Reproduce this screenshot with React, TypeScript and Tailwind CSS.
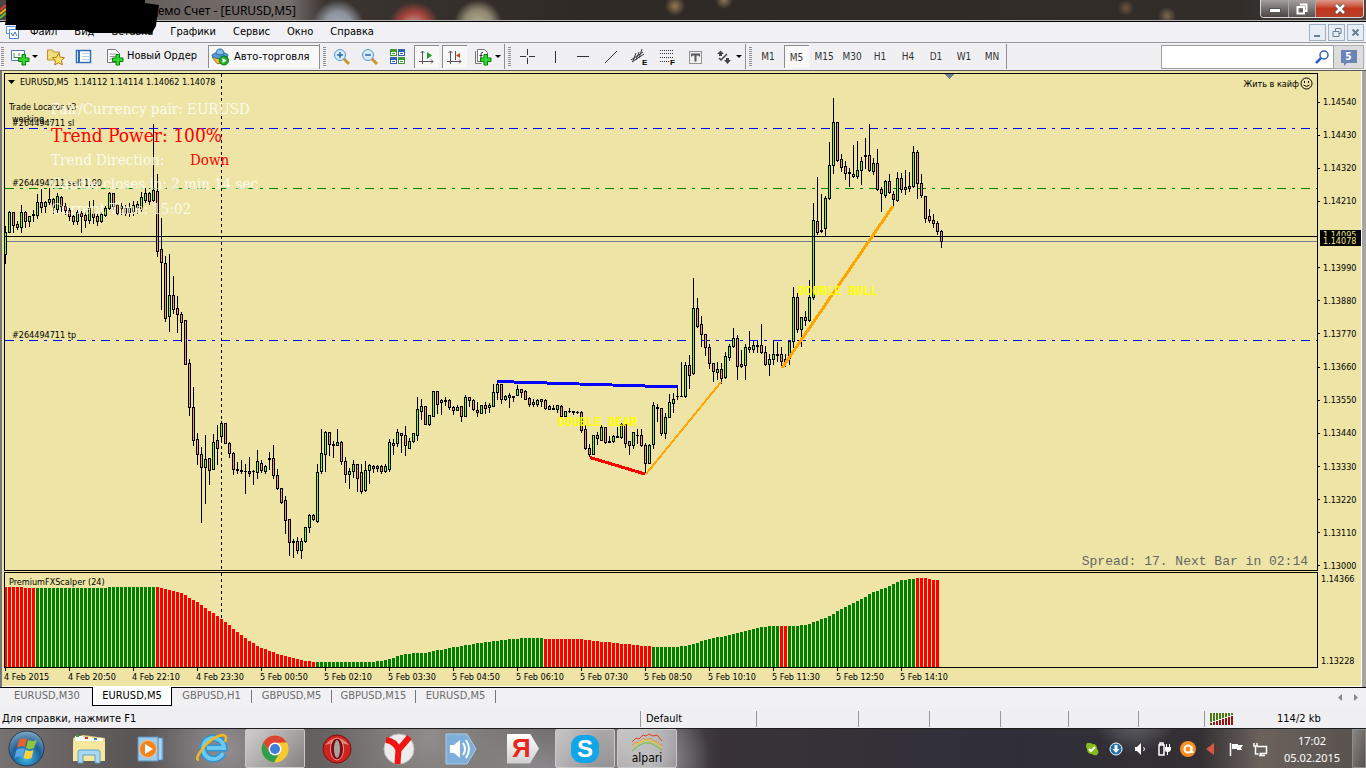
import { ReactNode } from "react";

type Candle = { high: number; top: number; bottom: number; low: number; up: boolean };

// high,top,bottom,low + g (up) / r (down), one candle every 4px
const rawCandles = `226,232,254,263g 211,212,232,232g 212,212,225,232r 221,224,227,229r 205,212,227,232g 211,212,221,227r 216,216,221,226g 210,214,215,221g
194,202,215,218g 189,202,207,212r 201,202,206,212g 188,199,202,204g 198,199,207,213r 193,196,209,212g 196,197,206,211r 203,206,210,214r
208,210,216,220r 215,216,221,224r 210,212,221,224g 211,213,216,232r 212,215,220,227r 201,208,220,223g 200,213,217,223r 213,216,221,225r
212,214,221,222g 206,208,215,216g 192,193,208,209g 193,193,206,209r 204,205,213,214r 203,206,208,214g 205,208,213,215r 203,208,212,216r
201,205,211,215g 201,204,207,213r 192,197,209,211g 188,193,200,202g 192,193,201,204r 124,190,200,201g 174,191,251,256r 218,249,262,309r
256,263,318,321r 254,295,316,331g 276,295,309,313r 296,308,314,332r 312,314,322,341r 320,320,364,364r 359,363,407,415r 387,407,440,445r
433,439,454,464r 447,454,467,522r 435,459,467,503g 458,458,470,484r 434,442,469,469g 425,440,448,464r 421,423,436,441g 423,423,443,443r
442,443,453,457r 452,453,469,474r 462,469,470,473r 460,470,471,473r 464,471,471,493r 457,471,473,476r 470,471,471,484g 450,461,472,478g
460,463,470,472r 465,466,471,473g 452,458,459,469g 445,458,475,478r 469,475,488,489r 488,488,502,503r 496,500,520,533r 519,519,542,555r
539,541,542,557r 537,541,550,553r 538,541,550,558g 527,527,541,542g 514,515,527,532g 514,515,519,520r 464,472,521,522g 429,453,471,473g
431,432,454,471g 432,432,444,455r 441,444,445,457r 429,442,445,445g 441,442,461,464r 457,461,474,482r 468,471,474,488g 460,464,471,477g
464,464,478,491r 464,472,491,493r 461,470,490,491g 464,465,470,483g 465,466,468,472r 465,466,468,471r 465,466,471,473r 464,466,471,472g
439,442,469,471g 439,443,445,454r 429,432,443,446g 433,433,435,452r 426,435,445,455r 438,441,448,448g 433,433,441,442g 397,409,435,440g
399,406,411,419g 406,406,424,424r 415,415,424,425g 391,391,416,416g 391,391,404,413r 399,400,402,414r 397,400,401,405r 399,400,407,409r
406,407,410,414r 405,407,410,410g 406,406,416,421r 395,397,416,416g 397,397,400,406r 399,400,409,410r 402,410,412,416r 405,405,413,413g
402,405,408,413r 403,405,407,412g 384,392,406,406g 382,384,392,399g 384,384,399,403r 395,396,399,400g 393,395,397,407g 396,396,397,401g
385,389,395,395g 389,389,392,397r 390,391,399,399r 397,398,404,406r 399,402,404,406r 399,400,404,406g 399,399,401,406r 399,400,408,409r
405,406,409,409r 405,408,409,409r 405,405,409,412g 405,406,416,417r 411,411,416,416g 408,411,411,412r 411,411,412,414r 411,412,412,413r
411,412,430,432r 425,429,448,449r 444,448,454,456r 435,435,454,454g 432,435,438,444r 425,427,440,440g 427,427,442,443r 436,441,442,442r
435,436,441,442g 427,436,437,437g 423,424,437,438g 424,424,443,447r 441,441,445,454r 432,432,445,448g 429,435,435,443r 429,435,445,446r
443,445,463,473r 444,445,463,463g 402,405,444,448g 404,407,408,421r 408,408,433,435r 413,417,433,438g 394,402,417,417g 393,399,403,412g
387,396,396,399g 362,396,396,396g 362,365,396,397g 355,365,375,388r 278,308,373,374g 298,308,326,327r 316,324,334,346r 334,334,347,355r
344,347,363,368r 363,363,371,381r 362,369,372,379g 363,369,378,383r 352,356,377,378g 344,346,357,360g 328,338,346,347g 335,338,366,379r
350,364,366,367r 344,347,365,379g 331,347,349,352r 341,345,349,352g 341,345,346,352r 324,345,352,353r 346,352,364,365r 354,359,364,375g
341,354,359,364g 342,354,355,361r 347,354,361,366r 354,359,362,366r 341,341,358,364g 287,297,341,347g 293,297,329,332r 317,317,329,346g
311,317,320,325r 280,297,320,321g 203,220,297,299g 177,221,232,234r 194,230,231,232g 196,198,228,236g 142,165,198,199g 98,122,165,173g
122,122,160,161r 154,159,167,171r 161,166,173,179r 168,172,173,186r 145,174,176,177r 141,170,176,178g 157,161,170,184g 138,155,156,168r
124,155,170,171r 158,163,171,174g 149,163,189,190r 187,189,193,211r 180,181,195,197g 174,181,192,193r 191,194,199,205r 172,178,200,201g
173,178,189,192r 170,187,189,194g 172,186,188,191r 146,152,186,187g 150,152,183,198r 174,183,195,197r 196,196,218,222r 209,216,220,222r
214,220,223,227r 221,223,231,234r 230,231,241,247r`;

const candles: Candle[] = rawCandles.split(/\s+/).map((c) => {
  const [high, top, bottom, low] = c.slice(0, -1).split(",").map(Number);
  return { high, top, bottom, low, up: c.endsWith("g") };
});

// x,top pairs of the oscillator, the bars between them are interpolated
const scalper = [
  [5, 587], [21, 587], [25, 588], [105, 588], [109, 587], [157, 587], [165, 589], [181, 593], [197, 602], [221, 619],
  [245, 638], [261, 648], [281, 655], [301, 660], [313, 662], [373, 662], [385, 660], [401, 655], [413, 653], [425, 653],
  [448, 648], [473, 644], [509, 639], [525, 638], [541, 638], [545, 639], [581, 639], [605, 642], [625, 644], [645, 646],
  [657, 647], [677, 647], [689, 645], [709, 639], [729, 635], [761, 627], [773, 626], [793, 626], [805, 625], [825, 618],
  [841, 609], [857, 601], [873, 592], [889, 586], [901, 580], [909, 579], [917, 578], [925, 578], [929, 579], [937, 580],
];

const barTop = (x: number) => {
  const i = Math.max(1, scalper.findIndex((p) => p[0] >= x));
  const [x0, y0] = scalper[i - 1];
  const [x1, y1] = scalper[i];
  return Math.round(y0 + ((x - x0) / (x1 - x0)) * (y1 - y0));
};

const isRed = (i: number) =>
  i < 8 || (i > 37 && i < 78) || (i > 134 && i < 162) || i === 194 || i === 195 || i > 227;

const prices = [
  "1.14540", "1.14430", "1.14320", "1.14210", "1.14100", "1.13990", "1.13880", "1.13770",
  "1.13660", "1.13550", "1.13440", "1.13330", "1.13220", "1.13110", "1.13000",
];

const times = [
  "4 Feb 2015", "4 Feb 20:50", "4 Feb 22:10", "4 Feb 23:30", "5 Feb 00:50", "5 Feb 02:10", "5 Feb 03:30", "5 Feb 04:50",
  "5 Feb 06:10", "5 Feb 07:30", "5 Feb 08:50", "5 Feb 10:10", "5 Feb 11:30", "5 Feb 12:50", "5 Feb 14:10",
];

const periods = ["M1", "M5", "M15", "M30", "H1", "H4", "D1", "W1", "MN"];

function Icon({ size = 18, children }: { size?: number; children: ReactNode }) {
  return (
    <svg width={size} height={size} viewBox={`0 0 ${size} ${size}`} className="shrink-0 overflow-visible" aria-hidden="true">
      {children}
    </svg>
  );
}

function Plus({ x, y }: { x: number; y: number }) {
  return (
    <path
      transform={`translate(${x} ${y})`}
      d="M4 .5h3.500v3.500h3.500v3.500h-3.500v3.500h-3.500v-3.500h-3.500v-3.500h3.500z"
      fill="#2fdc2f"
      stroke="#0b7a0b"
    />
  );
}

function Grip() {
  return (
    <svg width="4" height="20" className="mx-px shrink-0" aria-hidden="true">
      {[0, 1, 2, 3, 4, 5, 6, 7, 8, 9].map((i) => (
        <rect key={i} y={i * 2} width="3" height="1" fill="#8f8f8f" />
      ))}
    </svg>
  );
}

function Caret() {
  return (
    <svg width="6" height="3" className="shrink-0" aria-hidden="true">
      <path d="M0 0h6L3 3z" fill="#000" />
    </svg>
  );
}

function Tool({ label, on, children }: { label: string; on?: boolean; children: ReactNode }) {
  return (
    <button aria-label={label} className="flex w-7 shrink-0 justify-center">
      <span
        className={`flex h-[23px] w-[25px] items-center justify-center ${on ? "border-t border-l border-[#8c8c8c] bg-[#f8f8f8]" : ""}`}>
        {children}
      </span>
    </button>
  );
}

function Separator() {
  return <div className="mr-[2px] h-[25px] w-px shrink-0 bg-[#8f8f8f]" />;
}

function TitleBar() {
  return (
    <header className="relative flex h-[22px] shrink-0 justify-between border-b border-black bg-[radial-gradient(circle_at_338px_26px,#a3abba_0,#8d929d_14px,transparent_26px),radial-gradient(circle_at_414px_28px,#c9b9b5_0,#a8463c_15px,transparent_26px),radial-gradient(circle_at_478px_24px,#b5ad94_0,#8f866f_14px,transparent_24px),radial-gradient(circle_at_675px_6px,#94784f_0,transparent_10px),radial-gradient(circle_at_724px_0px,#8b7655_0,transparent_9px),radial-gradient(circle_at_1167px_16px,#7c6950_0,transparent_9px),radial-gradient(circle_at_1126px_8px,#75543a_0,transparent_8px),linear-gradient(90deg,#4a4442,#6e6764_200px,#756e6a_290px,#3b3431_325px,#2f2926_600px,#332d2a_1240px,#4c4542)] shadow-[inset_0_-1px_0_#b5b5b5]">
      <div className="flex">
        <svg width="6" height="20" aria-hidden="true">
          <path d="M0 10l6-5" stroke="#e2401c" strokeWidth="2" />
          <path d="M0 14l6-5" stroke="#f0b020" strokeWidth="2" />
          <path d="M0 18l6-5" stroke="#5cc22a" strokeWidth="2" />
        </svg>
        <h1 className="ml-[143px] font-['Noto_Sans'] text-[12px] leading-[22px] text-black">Демо Счет - [EURUSD,M5]</h1>
      </div>
      <div className="mr-[2px] flex h-[18px] overflow-hidden rounded-b border border-t-0 border-[#d8d8d8]">
        <button aria-label="Свернуть" className="flex w-7 items-center justify-center border-r border-[#aaa] bg-linear-to-b from-[#a49f9d] to-[#4a4442]">
          <span className="mt-1 h-[5px] w-3 border border-[#555] bg-white" />
        </button>
        <button aria-label="Развернуть" className="flex w-[27px] items-center justify-center border-r border-[#aaa] bg-linear-to-b from-[#a49f9d] to-[#5a5350]">
          <Icon size={14}>
            <path d="M5 2.500h6.500v6.500h-2M2.500 5h6.500v6.500h-6.500z" fill="none" stroke="#fff" strokeWidth="2" />
            <path d="M5 7.500h1.500v1.500h-1.500z" fill="#444" />
          </Icon>
        </button>
        <button aria-label="Закрыть" className="flex w-[47px] items-center justify-center bg-linear-to-b from-[#d99a8c] via-[#c4361c] to-[#b5402a]">
          <Icon size={12}>
            <path d="M2 2l8 8M10 2l-8 8" stroke="#555" strokeWidth="4" />
            <path d="M2 2l8 8M10 2l-8 8" stroke="#fff" strokeWidth="2.500" />
          </Icon>
        </button>
      </div>
    </header>
  );
}

function MenuBar() {
  return (
    <nav className="relative flex h-[21px] shrink-0 items-center justify-between border-b border-[#9a9a9a] bg-[#f1f1f5] pl-[5px]">
      <div className="flex items-center gap-[17px] text-[11px] leading-4">
        <Icon size={15}>
          <path d="M1.500 1.500h9v7h-9z" fill="#fff" stroke="#5b95d8" />
          <path d="M4.500 4.500h9v9h-9z" fill="#fff" stroke="#4a86d0" />
          <path d="M6 8l2 3 2-4 2 4" fill="none" stroke="#3a78c8" />
        </Icon>
        {["Файл", "Вид", "Вставка", "Графики", "Сервис", "Окно", "Справка"].map((m) => (
          <button key={m} className="first-of-type:-ml-[7px]">{m}</button>
        ))}
      </div>
      {/* blacked out account number */}
      <svg width="160" height="34" className="absolute -top-[22px] left-0" aria-hidden="true">
        <path d="M6 0h139v3l14 2-2 12-1 9-3 5-1 3-40-1H90l-5-3H16v-5H5l1-6z" fill="#000" />
      </svg>
      <div className="flex gap-[2px] pr-[2px]">
        {["M5 12h6", "M5 7.500h6v5h-6zM7.500 7v-2.500h5.500v5h-2", "M5.500 5.500l6 6M11.500 5.500l-6 6"].map((d, i) => (
          <button key={d} aria-label={["Свернуть окно", "Восстановить окно", "Закрыть окно"][i]} className="border border-[#9fb0c0] bg-[#e6edf5]">
            <Icon size={15}>
              <path d={d} transform="translate(-1 -1)" fill="none" stroke="#6b7f93" strokeWidth={i === 1 ? 1 : 2} />
            </Icon>
          </button>
        ))}
      </div>
    </nav>
  );
}

function Toolbar() {
  return (
    <div className="flex h-7 shrink-0 items-center border-b border-[#5f5a5a] bg-[#f0f0f2] text-[11px]">
      <Grip />
      <button aria-label="Новый график" className="flex w-9 shrink-0 items-center gap-[3px] pl-[5px]">
        <Icon>
          <path d="M.5 2.500h13v10h-13z" fill="#fff" stroke="#4a7ab0" />
          <path d="M3 5v5M3 9.500h6M8 5v3" stroke="#4a8a5a" fill="none" />
          <Plus x={7} y={6} />
        </Icon>
        <Caret />
      </button>
      <Tool label="Профили">
        <Icon size={20}>
          <path d="M1.500 13v-10h5l1 2h6v8z" fill="#f6dd7c" stroke="#b8923a" />
          <path d="M12.500 6.500l1.800 3.700 4.200.5-3 2.900.8 4.200-3.800-2-3.800 2 .8-4.200-3-2.900 4.200-.5z" fill="#ffe26a" stroke="#b07a1a" />
        </Icon>
      </Tool>
      <Tool label="Обзор рынка">
        <Icon>
          <path d="M1.500 2.500h14v12h-14z" fill="#fff" stroke="#2f6fb8" strokeWidth="1.500" />
          <path d="M4 3v11" stroke="#2f6fb8" strokeWidth="2" />
          <path d="M7 5.500h7M7 8.500h7M7 11.500h7" stroke="#b8cde6" />
        </Icon>
      </Tool>
      <button className="flex w-[110px] shrink-0 items-center gap-[3px] pl-2">
        <Icon>
          <path d="M1.500 1.500h8l4 4v9h-12z" fill="#fff" stroke="#777" />
          <path d="M3.500 6h7M3.500 8.500h7M3.500 11h4" stroke="#999" />
          <Plus x={6} y={6} />
        </Icon>
        Новый Ордер
      </button>
      <button className="flex h-[23px] w-[111px] shrink-0 items-center gap-[5px] border-t border-l border-[#8c8c8c] bg-[#f8f8f8] pl-[2px]">
        <Icon>
          <path d="M1 9l5 6.500h6l5-6.500z" fill="#e9b93c" stroke="#a5781c" />
          <ellipse cx="9" cy="7.500" rx="8" ry="3" fill="#4f9bd4" stroke="#2b6ca3" />
          <path d="M5 6q0-5 4-5t4 5q-4 2-8 0z" fill="#7cc0ea" stroke="#2b6ca3" />
          <circle cx="13" cy="12.500" r="4.500" fill="#23b12c" stroke="#0c6f14" />
          <path d="M11.500 10v5l4-2.500z" fill="#fff" />
        </Icon>
        Авто-торговля
      </button>
      <Separator />
      <Grip />
      {[true, false].map((plus) => (
        <Tool key={String(plus)} label={plus ? "Увеличить" : "Уменьшить"}>
          <Icon>
            <path d="M10.500 10.500l5.500 5.500" stroke="#c9972c" strokeWidth="3" />
            <circle cx="7" cy="7" r="5.500" fill="#d8ecfb" stroke="#5b93cc" />
            <path d={plus ? "M4 7h6M7 4v6" : "M4 7h6"} stroke="#2567b4" strokeWidth="1.500" />
          </Icon>
        </Tool>
      ))}
      <Tool label="Упорядочить окна">
        <Icon>
          {[[1, 1, "#3f9a2f"], [9, 1, "#2f63b5"], [1, 9, "#2f63b5"], [9, 9, "#3f9a2f"]].map(([x, y, c]) => (
            <g key={`${x}${y}`} transform={`translate(${x} ${y})`}>
              <path d="M0 0h7v7h-7z" fill={String(c)} />
              <path d="M1 3h5v3h-5z" fill="#fff" />
              <path d="M2 4.500h3" stroke={String(c)} />
            </g>
          ))}
        </Icon>
      </Tool>
      <Tool label="Автопрокрутка" on>
        <Icon>
          <path d="M4.500 3v13M1 13.500h14M2.500 5l2-2 2 2M13 11.500l2 2-2 2" fill="none" stroke="#555" />
          <path d="M9 4l5 3.500-5 3.500z" fill="#1f9d2c" />
        </Icon>
      </Tool>
      <Tool label="Сдвиг графика" on>
        <Icon>
          <path d="M4.500 3v13M1 13.500h14M2.500 5l2-2 2 2M13 11.500l2 2-2 2M9.500 3v9" fill="none" stroke="#555" />
          <path d="M10 7.500l4-2.500v5z" fill="#d2401a" />
        </Icon>
      </Tool>
      <button aria-label="Индикаторы" className="flex h-6 w-9 shrink-0 items-center gap-[3px] pl-[6px]">
        <Icon>
          <path d="M3.500 1.500h7l3 3v9h-10z" fill="#fff" stroke="#777" />
          <path d="M1.500 3v12.500h6" fill="none" stroke="#777" />
          <path d="M9 4.500h-1q-1 0-1 2v5M5.500 7.500h3" fill="none" stroke="#333" />
          <Plus x={6} y={6} />
        </Icon>
        <Caret />
      </button>
      <Separator />
      <Grip />
      <Tool label="Перекрестие">
        <Icon><path d="M9.500 1v6M9.500 10v6M2 8.500h6M11 8.500h6" stroke="#333" /></Icon>
      </Tool>
      <Tool label="Вертикальная линия">
        <Icon><path d="M9.500 3v12" stroke="#333" /></Icon>
      </Tool>
      <Tool label="Горизонтальная линия">
        <Icon><path d="M3 8.500h12" stroke="#333" /></Icon>
      </Tool>
      <Tool label="Трендовая линия">
        <Icon><path d="M3 15l12-12" stroke="#333" /></Icon>
      </Tool>
      <Tool label="Канал">
        <Icon>
          <path d="M1 12l12-8M2 14l12-8M3 13l3-8M6 12l3-8M9 10l3-9" stroke="#333" />
          <text x="12" y="17" className="font-['Liberation_Sans'] text-[8px] font-bold">E</text>
        </Icon>
      </Tool>
      <Tool label="Фибоначчи">
        <Icon>
          <path d="M2 2.500h14M2 5.500h14M2 9.500h14M2 13.500h9" stroke="#333" strokeDasharray="1 1" />
          <text x="12" y="17" className="font-['Liberation_Sans'] text-[8px] font-bold">F</text>
        </Icon>
      </Tool>
      <Tool label="Текстовая метка">
        <Icon>
          <path d="M3.500 3.500h12v12h-12z" fill="none" stroke="#333" strokeDasharray="1 1" />
          <path d="M5 5.500h9v3h-1l-.5-1h-2v6h-2v-6h-2l-.5 1h-1z" fill="#555" />
        </Icon>
      </Tool>
      <button aria-label="Стрелки" className="flex h-6 w-9 shrink-0 items-center gap-[3px] pl-[6px]">
        <Icon>
          <path d="M2 6l3.500-3.500 3.500 3.500-2 0v2h-3v-2zM9 12h2v-2h3v2h2l-3.500 4z" fill="#444" />
          <path d="M4 10l2 2 6-6" stroke="#444" fill="none" strokeWidth="1.500" />
        </Icon>
        <Caret />
      </button>
      <Separator />
      <Grip />
      {periods.map((p) => (
        <button key={p} className="flex w-7 shrink-0 justify-center text-[10px] text-[#333]">
          <span className={`flex h-[23px] w-[25px] items-center justify-center ${p === "M5" ? "border-t border-l border-[#8c8c8c] bg-[#f8f8f8]" : ""}`}>
            {p}
          </span>
        </button>
      ))}
      <Separator />
      <div className="ml-auto flex h-6 pr-[2px]">
        <label className="flex w-[173px] items-center border border-[#a0a0a0] bg-white pr-1">
          <input type="search" aria-label="Поиск" className="min-w-0 flex-1 outline-none" />
          <Icon size={14}>
            <circle cx="9" cy="5" r="4" fill="#fff" stroke="#2d62c8" strokeWidth="1.500" />
            <path d="M6 8l-5 5" stroke="#2d62c8" strokeWidth="2.500" />
          </Icon>
        </label>
        <button className="flex w-[30px] items-center justify-center border border-l-0 border-[#b0b0b0] bg-[#dcdcdc]">
          <span className="relative h-[13px] w-4 bg-[#6b83b5] text-center text-[10px] leading-[13px] font-bold text-white">
            5
            <i className="absolute top-3 left-[3px] border-t-4 border-r-4 border-t-[#6b83b5] border-r-transparent" />
          </span>
        </button>
      </div>
    </div>
  );
}

function PriceChart() {
  return (
    <div className="flex min-h-0 flex-1">
      <div className="relative min-w-0 flex-1 overflow-hidden border border-black">
        <svg className="block h-full w-full" viewBox="5 74 1312 496" preserveAspectRatio="none" shapeRendering="crispEdges" aria-hidden="true">
          <path d="M5 128.500h1312M5 340.500h1312" stroke="#0000ff" strokeDasharray="9 6 3 6" />
          <path d="M5 188.500h1312" stroke="#008000" strokeDasharray="9 6 3 6" />
          <path d="M221.500 74v496" stroke="#000" strokeDasharray="3 3" />
          <path d="M5 241.500h1312" stroke="#708090" />
          {candles.map((c, i) => {
            const x = 5 + i * 4;
            return (
              <g key={i}>
                <rect x={x} y={c.high} width="1" height={c.low - c.high + 1} />
                <rect x={x - 1} y={c.top} width="3" height={c.bottom - c.top + 1} />
                {c.bottom - c.top > 1 && (
                  <rect x={x} y={c.top + 1} width="1" height={c.bottom - c.top - 1} fill={c.up ? "#7cfc00" : "#e9967a"} />
                )}
              </g>
            );
          })}
          <path d="M5 236.500h1312" stroke="#000" />
          <path d="M497 381.500L678 387" stroke="#0000ff" strokeWidth="3" />
          <path d="M590 457.500L645 474" stroke="#ff0000" strokeWidth="3" />
          <path d="M646 474L721 382" stroke="#ffa500" strokeWidth="2" />
          <path d="M782 368L893 206" stroke="#ffa500" strokeWidth="3" />
          <path d="M944 74h10l-5 5z" fill="#708090" />
        </svg>
        <div className="absolute top-[2px] left-[3px] flex items-center gap-[5px] whitespace-pre leading-3">
          <svg width="7" height="4" aria-hidden="true"><path d="M0 0h7L3.500 4z" /></svg>
          EURUSD,M5  1.14112 1.14114 1.14062 1.14078
        </div>
        <p className="absolute top-[27px] left-1 leading-3">Trade Locator v3</p>
        <p className="absolute top-[39px] left-[7px] leading-3">working...</p>
        <p className="absolute top-[43px] left-[7px] leading-3">#264494711 sl</p>
        <p className="absolute top-[103px] left-[7px] leading-3">#264494711 sell 1.00</p>
        <p className="absolute top-[255px] left-[7px] leading-3">#264494711 tp</p>
        <div className="absolute top-[23px] left-[46px] font-['DejaVu_Serif_Condensed','DejaVu_Serif',serif] text-[15px] leading-[25px] text-white/80">
          <p>Pair/Currency pair: EURUSD</p>
          <p className="text-[19px] leading-[27px] text-[#ff0000]">Trend Power: 100%</p>
          <p className="flex leading-[23px]">
            <span className="w-[139px]">Trend Direction:</span>
            <span className="text-[#ff0000]">Down</span>
          </p>
          <p>Candle closes in: 2 min 14 sec</p>
          <p>Current Time: 15:02</p>
        </div>
        <p className="absolute top-[341px] left-[553px] font-['Liberation_Mono'] text-[12px] leading-4 font-bold text-[#ffff00]">DOUBLE BEAR</p>
        <p className="absolute top-[210px] left-[793px] font-['Liberation_Mono'] text-[12px] leading-4 font-bold text-[#ffff00]">DOUBLE BULL</p>
        <div className="absolute top-[3px] right-1 flex items-center gap-px leading-3">
          Жить в кайф
          <svg width="13" height="13" viewBox="0 0 13 13" fill="none" stroke="#000" aria-hidden="true">
            <circle cx="6.500" cy="6.500" r="5.500" />
            <path d="M4.500 4v2M8.500 4v2M3.500 8q3 3 6 0" />
          </svg>
        </div>
        <p className="absolute right-[9px] bottom-0 font-['Liberation_Mono'] text-[13px] leading-4 text-[#666]">Spread: 17. Next Bar in 02:14</p>
      </div>
      <div className="relative -mb-px flex w-[43px] flex-col justify-between pt-[23px] leading-3">
        {prices.map((p) => (
          <span key={p} className={`flex items-center gap-[3px] before:h-px before:w-[2px] before:bg-black ${p === "1.14100" ? "invisible" : ""}`}>
            {p}
          </span>
        ))}
        <span className="absolute top-[157px] left-[2px] w-[41px] bg-black pb-[5px] pl-[3px] leading-[11px] text-[#f0e68c]">1.14095</span>
        <span className="absolute top-[163px] left-[2px] w-[41px] bg-black pl-[3px] leading-[10px] text-[#f0e68c]">1.14078</span>
      </div>
    </div>
  );
}

function ScalperChart() {
  return (
    <div className="mt-px flex h-24 shrink-0">
      <div className="relative min-w-0 flex-1 overflow-hidden border border-black">
        <svg className="block h-full w-full" viewBox="5 573 1312 94" preserveAspectRatio="none" shapeRendering="crispEdges" aria-hidden="true">
          <path d="M221.500 573v94" stroke="#000" strokeDasharray="3 3" />
          {candles.slice(0, -1).map((_, i) => {
            const x = 5 + i * 4;
            return <rect key={i} x={x - 1} y={barTop(x)} width="3" height={667 - barTop(x)} fill={isRed(i) ? "#ff0000" : "#008000"} />;
          })}
        </svg>
        <p className="absolute top-[3px] left-1 leading-3">PremiumFXScalper (24)</p>
      </div>
      <div className="flex w-[43px] flex-col justify-between py-px pl-[3px] leading-3">
        <span>1.14366</span>
        <span>1.13228</span>
      </div>
    </div>
  );
}

function ChartWindow() {
  return (
    <main className="flex min-h-0 flex-1 border-r-4 border-l-2 border-r-[#a5a5a5] border-l-[#77777a] bg-white">
      <div className="mr-px flex min-w-0 flex-1 flex-col border-b border-white bg-[#ede4a5] pt-[2px] pl-[2px] text-[9px] text-black">
        <PriceChart />
        <ScalperChart />
        <div className="flex h-[18px] shrink-0 overflow-hidden">
          {times.map((t) => (
            <span key={t} className="w-16 shrink-0 whitespace-nowrap">
              <i className="ml-px block h-[3px] w-px bg-black" />
              <span className="block leading-3">{t}</span>
            </span>
          ))}
        </div>
      </div>
    </main>
  );
}

function Tabs() {
  return (
    <div className="flex h-5 shrink-0 items-start justify-between border-t border-black bg-[#f1f1f3] pl-3 text-[11px] text-[#6b6b6b]">
      <div className="flex h-full">
        {["EURUSD,M30", "EURUSD,M5", "GBPUSD,H1", "GBPUSD,M5", "GBPUSD,M15", "EURUSD,M5"].map((t, i) =>
          i === 1 ? (
            <button key={i} className="-mt-px h-[19px] w-20 border border-t-0 border-black bg-white text-black">{t}</button>
          ) : (
            <button
              key={i}
              className={`my-[2px] flex h-[13px] items-center justify-center ${i === 4 ? "w-[84px]" : "w-20"} ${i > 1 ? "border-r border-[#777]" : "pr-[10px]"}`}>
              {t}
            </button>
          ),
        )}
      </div>
      <div className="flex gap-3 pt-[6px] pr-2">
        <button aria-label="Назад"><svg width="4" height="7"><path d="M4 0v7L0 3.500z" fill="#888" /></svg></button>
        <button aria-label="Вперед"><svg width="4" height="7"><path d="M0 0v7l4-3.500z" fill="#888" /></svg></button>
      </div>
    </div>
  );
}

function StatusBar() {
  return (
    <footer className="flex h-[21px] shrink-0 items-center bg-[#f0f0f3] pt-[3px] text-[11px] leading-4">
      <span className="min-w-0 flex-1 pl-[2px]">Для справки, нажмите F1</span>
      <span className="w-[116px] border-l border-[#999] pl-[5px]">Default</span>
      <span className="h-4 w-[102px] border-l border-[#999]" />
      <span className="h-4 w-[71px] border-l border-[#999]" />
      <span className="h-4 w-[71px] border-l border-[#999]" />
      <span className="h-4 w-[68px] border-l border-[#999]" />
      <span className="h-4 w-[70px] border-l border-[#999]" />
      <span className="h-4 w-[66px] border-l border-[#999]" />
      <span className="flex w-[162px] items-center border-l border-[#999] pl-[5px]">
        <svg width="24" height="12" shapeRendering="crispEdges" aria-hidden="true">
          {[0, 1, 2, 3, 4, 5, 6, 7].map((i) => (
            <g key={i}>
              <rect x={i * 3} y="0" width="2" height={9 - i} fill="#4d7a10" />
              <rect x={i * 3} y={10 - i} width="2" height={2 + i} fill="#9c1515" />
            </g>
          ))}
        </svg>
        <span className="flex-1 pl-[43px]">114/2 kb</span>
      </span>
    </footer>
  );
}

function Task({ label, open, children }: { label: string; open?: boolean; children: ReactNode }) {
  return (
    <button
      aria-label={label}
      className={`flex h-[39px] w-[60px] items-center justify-center ${open ? "rounded-xs border border-[#c9c9c9] bg-linear-to-br from-white/60 to-white/20" : ""}`}>
      {children}
    </button>
  );
}

function Taskbar() {
  return (
    <div className="flex h-10 shrink-0 items-center justify-between border-t border-[#1c1c1c] bg-[radial-gradient(circle_at_225px_20px,#938e90_0,transparent_80px),radial-gradient(circle_at_430px_8px,#8f8c8a_0,transparent_110px),radial-gradient(circle_at_540px_60px,#98969a_0,transparent_80px),radial-gradient(circle_at_650px_30px,#a2a2a4_0,transparent_60px),radial-gradient(circle_at_1135px_-20px,#74767e_0,transparent_45px),linear-gradient(90deg,#77716f,#5a5656_130px,#6e6a68_480px,#5c575a_650px,#393338_720px,#2f2e39_1000px,#332f33_1200px,#6b625c_1260px,#57504c)]">
      <div className="flex items-center">
        <button aria-label="Пуск" className="mr-[14px] ml-2">
          <svg width="37" height="37" viewBox="0 0 37 37" aria-hidden="true">
            <defs>
              <radialGradient id="orb" cx=".5" cy=".75" r=".8">
                <stop offset="0" stopColor="#3fc0ee" />
                <stop offset=".5" stopColor="#1f5f97" />
                <stop offset="1" stopColor="#8fb3cc" />
              </radialGradient>
            </defs>
            <circle cx="18.500" cy="18.500" r="17.500" fill="url(#orb)" stroke="#223c55" />
            <path d="M11 10q4-3 8-1l-2 8q-4-2-8 1z" fill="#e8602a" />
            <path d="M20 10q4 2 9 0l-3 8q-4 2-8 0z" fill="#8cc63e" />
            <path d="M8.500 20q4-3 8-1l-2 8q-4-2-8 1z" fill="#58a8e8" />
            <path d="M17.500 20q4 2 8 0l-2 8q-4 2-8 0z" fill="#fbd03c" />
          </svg>
        </button>
        <div className="flex gap-[2px]">
          <Task label="Проводник">
            <svg width="34" height="30" viewBox="0 0 34 30">
              <path d="M1 4l10-3 22 3v22h-32z" fill="#e9cf77" />
              <path d="M3 2h8v6h-8zM11 3h9v5h-9zM20 4h11v5h-11z" fill="#fff" />
              <path d="M4 1h3v2h-3z" fill="#2da32d" /><path d="M13 3h3v2h-3z" fill="#d43a1a" /><path d="M22 4h3v2h-3z" fill="#2d86d0" />
              <path d="M1 7h32v20h-32z" fill="#f7e79e" />
              <path d="M6 29v-11q0-2 2-2h18q2 0 2 2v11h-5v-8h-12v8z" fill="#a7d8ef" stroke="#5aa3c8" />
            </svg>
          </Task>
          <Task label="Проигрыватель">
            <svg width="28" height="26" viewBox="0 0 28 26">
              <path d="M6 2h20v22h-20z" fill="#8ec0e4" stroke="#4a86b8" /><path d="M23 2v22" stroke="#d3e9f8" />
              <path d="M1 1h20v24h-20z" fill="#9ccbea" stroke="#5a94c0" />
              <circle cx="11" cy="13" r="8.500" fill="#f08421" stroke="#fbc28a" /><path d="M8 8v10l8-5z" fill="#fff" />
            </svg>
          </Task>
          <Task label="Internet Explorer">
            <svg width="34" height="32" viewBox="0 0 34 32">
              <path d="M27 20a10.500 10.500 0 1 1 1-5h-17" fill="none" stroke="#2f93d4" strokeWidth="7" />
              <path d="M27 20a10.500 10.500 0 1 1 1-5h-17" fill="none" stroke="#6ccaf2" strokeWidth="4" />
              <path d="M3 27q-5 0 4-12 9-11 19-13 6 0 3 7" fill="none" stroke="#f2b820" strokeWidth="2.500" />
            </svg>
          </Task>
          <Task label="Chrome" open>
            <svg width="28" height="28" viewBox="0 0 28 28">
              <circle cx="14" cy="14" r="13.500" fill="#f6c92c" />
              <path d="M2.300 7.300a13.500 13.500 0 0 1 23.400 0l-11.700 .7-6 9z" fill="#dc4437" />
              <path d="M2.300 7.300a13.500 13.500 0 0 0 10.700 20.200l6-10.500-11 0z" fill="#2f9e4f" />
              <circle cx="14" cy="14" r="6.500" fill="#fff" /><circle cx="14" cy="14" r="5" fill="#3b7fd9" />
            </svg>
          </Task>
          <Task label="Opera">
            <svg width="30" height="30" viewBox="0 0 30 30">
              <circle cx="15" cy="15" r="14" fill="#cf2420" stroke="#7e0f0d" />
              <path d="M3 11q12-14 24 0-12-4-24 0z" fill="#e8827c" />
              <ellipse cx="15" cy="15" rx="6.500" ry="11" fill="#7a0e0c" stroke="#f29a92" /><ellipse cx="15" cy="15" rx="3" ry="9" fill="#a9a2a2" />
            </svg>
          </Task>
          <Task label="Яндекс.Браузер">
            <svg width="32" height="32" viewBox="0 0 32 32">
              <circle cx="16" cy="16" r="15" fill="#ececec" stroke="#c0c0c0" />
              <path d="M3 7q9 1 12.500 10l11-13M15.500 16l-1 15" fill="none" stroke="#f01414" strokeWidth="6" />
            </svg>
          </Task>
          <Task label="Звук">
            <svg width="32" height="32" viewBox="0 0 32 32">
              <path d="M1 1h21l9 15-9 15h-21z" fill="#7eaeda" stroke="#a9cbea" />
              <path d="M5 12h4l6-5v18l-6-5h-4z" fill="#fff" /><path d="M18 10q4 6 0 12M21 7q6 9 0 18" fill="none" stroke="#fff" strokeWidth="2" />
            </svg>
          </Task>
          <Task label="Яндекс">
            <span className="flex h-[30px] w-8 items-center bg-linear-to-b from-white to-[#cfcfcf] pl-[5px] font-['Liberation_Sans'] text-[26px] font-bold text-[#e8281c] [clip-path:polygon(0_0,72%_0,100%_50%,72%_100%,0_100%)]">Я</span>
          </Task>
          <Task label="Skype" open>
            <span className="flex size-7 items-center justify-center rounded-[11px] bg-[#12a5e8] font-['Liberation_Sans'] text-[24px] leading-7 font-bold text-white">S</span>
          </Task>
          <Task label="alpari" open>
            <span className="flex flex-col items-center text-[12px] leading-3 text-black">
              <svg width="32" height="19" viewBox="0 0 32 19" fill="none">
                <path d="M1 9l4-4 3 1 4-4 3 1 3-2 4 2 4-1 5 6" stroke="#e2401c" />
                <path d="M1 12l4-3 3 1 4-5 3 2 4-2 4 3 3 1 5 4" stroke="#f0902a" />
                <path d="M1 15l5-4 4-2 6-2 5 2 4 1 6 5" stroke="#e0d020" />
                <path d="M1 18l6-5 6-3h6l6 3 6 4" stroke="#6cc22a" />
              </svg>
              alpari
            </span>
          </Task>
        </div>
      </div>
      <div className="flex h-full items-center text-white">
        <div className="flex *:flex *:w-6 *:items-center *:justify-center">
          <span><Icon size={14}><path d="M1 4q0-4 4-3l3 1q4 0 4 5 3 3 0 6-3 1-5-1-5 0-5-5-1-1-1-3z" fill="#84bd1a" /><path d="M4 7l2 2 4-4" fill="none" stroke="#fff" strokeWidth="2" /></Icon></span>
          <span><Icon size={14}><circle cx="7" cy="7" r="6" fill="#1d6fae" stroke="#fff" /><path d="M5.500 3h3v4h2L7 11 3.500 7h2z" fill="#fff" /></Icon></span>
          <span><Icon size={14}><path d="M2 5h2l4-4v12l-4-4h-2z" fill="#fff" /><path d="M10.500 5q2 2 0 4" stroke="#fff" fill="none" /></Icon></span>
          <span><Icon size={14}><path d="M2 3h5v10h-5zM3 1h3v2h-3z" fill="none" stroke="#fff" strokeWidth="1.500" /><path d="M8 5h6v3q-1 2-3 2v3h-1v-3q-2 0-2-2zM9 2h1v3h-1zM12 2h1v3h-1z" fill="#fff" /></Icon></span>
          <span><Icon size={16}><circle cx="8" cy="8" r="8" fill="#f78f1e" /><circle cx="8" cy="8" r="3.500" fill="none" stroke="#fff" strokeWidth="2" /><path d="M11.500 5v6h2" stroke="#fff" strokeWidth="2" fill="none" /></Icon></span>
          <span><Icon size={14}><path d="M1 7l8-6v12z" fill="#d8573f" /><path d="M11 4q2 3 0 6" stroke="#8c2a1c" fill="none" /></Icon></span>
          <span><Icon size={14}><path d="M1.500 1v13" stroke="#fff" strokeWidth="1.500" /><path d="M3 2h6v1h5l-2 3 1 2h-5v-1h-5z" fill="#fff" /></Icon></span>
          <span><Icon size={14}><path d="M4 4.500h9.500v7h-7M8 11v3M6 13.500h6M1 1v3h3v-3M2.500 4v8h3" fill="none" stroke="#fff" strokeWidth="1.500" /></Icon></span>
        </div>
        <time className="flex w-20 flex-col text-center font-['Noto_Sans'] text-[11px] leading-[17px]">
          <span>17:02</span>
          <span>05.02.2015</span>
        </time>
        <button aria-label="Свернуть все окна" className="h-full w-[14px] border border-[#8d8d8d] bg-linear-to-br from-white/30 to-transparent" />
      </div>
    </div>
  );
}

export default function App() {
  return (
    <div className="flex h-screen min-h-[480px] flex-col overflow-hidden bg-[#f0f0f0] font-['DejaVu_Sans_Condensed','DejaVu_Sans',sans-serif] text-black">
      <TitleBar />
      <MenuBar />
      <Toolbar />
      <ChartWindow />
      <Tabs />
      <StatusBar />
      <Taskbar />
    </div>
  );
}
